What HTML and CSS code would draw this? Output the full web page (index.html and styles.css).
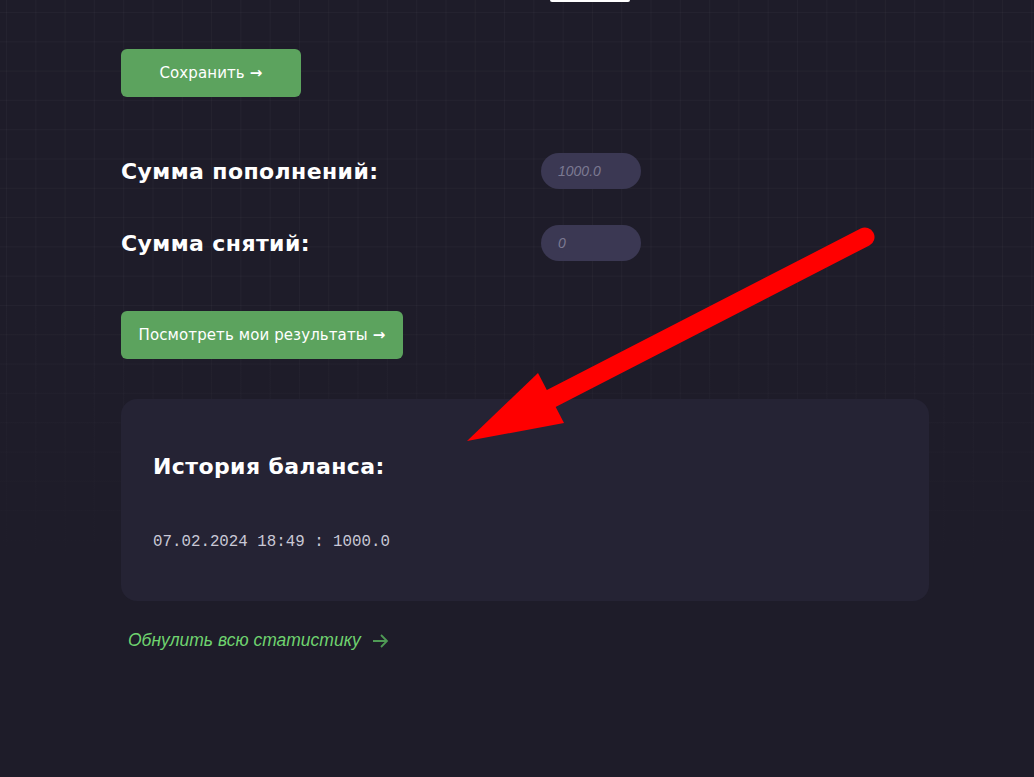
FILE: index.html
```html
<!DOCTYPE html>
<html lang="ru">
<head>
<meta charset="utf-8">
<title>Статистика</title>
<link rel="stylesheet" href="styles.css">
</head>
<body>
<div class="page">
  <div class="top-bit"></div>
  <button class="btn btn-save">Сохранить <span class="arr">&#x2192;</span></button>

  <div class="fields">
    <div class="row">
      <div class="label">Сумма пополнений:</div>
      <div class="input">1000.0</div>
    </div>
    <div class="row">
      <div class="label">Сумма снятий:</div>
      <div class="input">0</div>
    </div>
  </div>

  <button class="btn btn-results">Посмотреть мои результаты <span class="arr">&#x2192;</span></button>

  <section class="card">
    <h2 class="card-title">История баланса:</h2>
    <div class="history">07.02.2024 18:49 : 1000.0</div>
  </section>

  <a class="reset" href="#">Обнулить всю статистику
    <svg class="reset-arrow" width="17" height="16" viewBox="0 0 17 16"><path d="M1 8 H15 M9 2 L15 8 L9 14" fill="none" stroke="#4f9a55" stroke-width="1.8"/></svg>
  </a>
</div>

<svg class="annot" width="1034" height="777" viewBox="0 0 1034 777">
  <line x1="865" y1="237" x2="525" y2="412" stroke="#ff0000" stroke-width="19" stroke-linecap="round"/>
  <polygon points="538,373 467,441 564,423" fill="#ff0000"/>
</svg>
</body>
</html>
```

FILE: styles.css
```css
html, body {
  margin: 0;
  padding: 0;
}
body {
  width: 1034px;
  min-height: 777px;
  overflow: hidden;
  position: relative;
  background-color: #1e1c29;
  background-image:
    linear-gradient(to bottom, rgba(30,28,41,0) 0px, rgba(30,28,41,0) 300px, rgba(30,28,41,1) 560px),
    linear-gradient(to right, rgba(255,255,255,0.028) 1px, transparent 1px),
    linear-gradient(to bottom, rgba(255,255,255,0.028) 1px, transparent 1px);
  background-size: 100% 100%, 29.3px 29.3px, 29.3px 29.3px;
  background-position: 0 0, 6px 0, 0 12px;
  font-family: "DejaVu Sans", "Noto Sans", sans-serif;
  color: #ffffff;
}
.page {
  padding-left: 121px;
  width: 808px;
  display: flex;
  flex-direction: column;
  align-items: flex-start;
}
.top-bit {
  margin-left: 429px;
  width: 80px;
  height: 2px;
  background: #ffffff;
  border-radius: 0 0 5px 5px;
}
.btn {
  border: none;
  background: #5ca35e;
  color: #ffffff;
  font-family: "DejaVu Sans", sans-serif;
  font-size: 15px;
  letter-spacing: 0.1px;
  height: 48px;
  border-radius: 6px;
  cursor: pointer;
  display: flex;
  align-items: center;
  justify-content: center;
  padding: 0;
}
.btn .arr {
  font-weight: bold;
  margin-left: 5px;
}
.btn-save {
  margin-top: 47px;
  width: 180px;
}
.btn-results {
  margin-top: 50px;
  width: 282px;
}
.fields {
  margin-top: 56px;
  display: flex;
  flex-direction: column;
  gap: 36px;
}
.row {
  display: flex;
  align-items: center;
  height: 36px;
}
.label {
  width: 420px;
  font-size: 22px;
  font-weight: bold;
  letter-spacing: 0.4px;
}
.input {
  width: 100px;
  height: 36px;
  box-sizing: border-box;
  padding-left: 17px;
  border-radius: 18px;
  background: #3b3853;
  color: #7c7a92;
  font-family: "Liberation Sans", Arial, sans-serif;
  font-style: italic;
  font-size: 14px;
  display: flex;
  align-items: center;
}
.card {
  margin-top: 40px;
  width: 808px;
  height: 202px;
  box-sizing: border-box;
  padding: 54px 32px 0;
  background: #252334;
  border-radius: 16px;
}
.card-title {
  margin: 0;
  font-size: 22px;
  font-weight: bold;
  letter-spacing: 0.4px;
  line-height: 28px;
}
.history {
  margin-top: 52px;
  font-family: "Liberation Mono", "Courier New", monospace;
  font-size: 15.8px;
  color: #c9c8d6;
}
.reset {
  margin-top: 29px;
  margin-left: 7px;
  display: flex;
  align-items: center;
  gap: 11px;
  font-family: "Liberation Sans", Arial, sans-serif;
  font-style: italic;
  font-size: 17.5px;
  color: #6fd36f;
  text-decoration: none;
}
.annot {
  position: absolute;
  left: 0;
  top: 0;
  pointer-events: none;
}
```
